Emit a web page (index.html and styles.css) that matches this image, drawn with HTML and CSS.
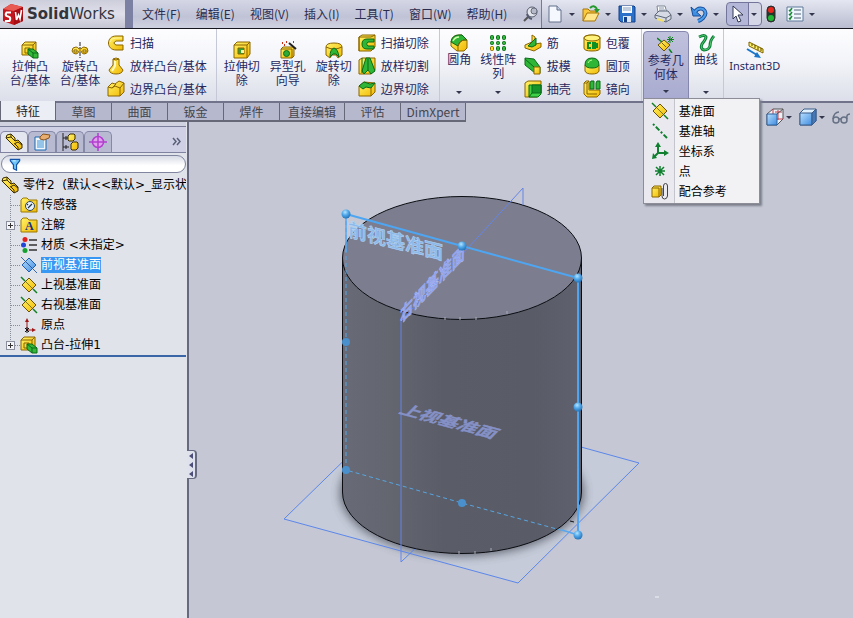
FILE: index.html
```
<!DOCTYPE html>
<html lang="zh-CN">
<head>
  <meta charset="UTF-8">
  <title>SolidWorks</title>
  <link rel="stylesheet" href="styles.css">
</head>
<body>
  <svg class="sprite" aria-hidden="true">
    <defs>
      <linearGradient id="gold" x1="0" y1="0" x2="1" y2="1"><stop offset="0" stop-color="#fff36a"/><stop offset="1" stop-color="#f2b800"/></linearGradient>
      <linearGradient id="blue" x1="0" y1="0" x2="1" y2="1"><stop offset="0" stop-color="#b8e0ff"/><stop offset="1" stop-color="#3f8be0"/></linearGradient>
    </defs>
    <symbol id="i-logo" viewBox="0 0 22 22">
      <path d="M1 6L9 1l12 3v14l-9 4L1 18z" fill="#c4161c"/><path d="M1 6L9 1l12 3-9 4z" fill="#e85a52"/><path d="M12 8l9-4v14l-9 4z" fill="#a80d14"/>
      <path d="M9 9.500H4.500q-1.500 2 0 3.500l3 1q1.500 1.500 0 4H3" fill="none" stroke="#fff" stroke-width="2"/><path d="M13.500 9l1 8 2-5 1.500 4 1.500-9" fill="none" stroke="#fff" stroke-width="1.600"/>
    </symbol>
    <symbol id="i-extrude" viewBox="0 0 18 18">
      <path d="M1 4l3-3h11v10l-3 3H1z" fill="url(#gold)" stroke="#8a6500"/><path d="M1 4h11v10M12 4l3-3M4 7h5v5H4z" fill="none" stroke="#8a6500"/>
      <path d="M7 8h5l5 4v5h-5l-5-4z" fill="#35b83a" stroke="#0a6b18"/><path d="M12 12h5M12 12v5M7 8l5 4" fill="none" stroke="#0a6b18"/>
    </symbol>
    <symbol id="i-revolve" viewBox="0 0 18 18">
      <path d="M9 1v16" stroke="#222" stroke-dasharray="4 1"/><path d="M1 10q0-4 4-4 2 0 3 2h2q1-2 3-2 4 0 4 4-1 3-4 3-2 0-3-3H8q-1 3-3 3-3 0-4-3z" fill="url(#gold)" stroke="#8a6500"/><path d="M3 9h3v2H3zM12 9h3v2h-3z" fill="#fff7a0" stroke="#8a6500"/>
    </symbol>
    <symbol id="i-sweep" viewBox="0 0 18 18"><path d="M16 2H9C-1 2-1 16 9 16h7v-5H9q-4-2 0-4h7z" fill="url(#gold)" stroke="#8a6500"/><path d="M15 4H9Q4 4 3 8" fill="none" stroke="#fff7a0"/></symbol>
    <symbol id="i-loft" viewBox="0 0 18 18"><path d="M6 2q3-2 6 0v6l4 5q-1 4-7 4t-7-4l4-5z" fill="url(#gold)" stroke="#8a6500"/><path d="M8 4v5l-3 5" fill="none" stroke="#fffbc0" stroke-width="2"/><path d="M6 2q3 2 6 0" fill="none" stroke="#8a6500"/></symbol>
    <symbol id="i-boundary" viewBox="0 0 18 18"><path d="M1 7l4-4 3 1 4-3 5 2v9l-4 4H1z" fill="url(#gold)" stroke="#8a6500"/><path d="M1 7l4 1 3-2 5 2 4-5M13 8v8M5 8l4-4" fill="none" stroke="#8a6500"/></symbol>
    <symbol id="i-cut" viewBox="0 0 18 18"><path d="M1 4l3-3h13v12l-3 4H1z" fill="url(#gold)" stroke="#8a6500"/><path d="M1 4h13v13M14 4l3-3" fill="none" stroke="#8a6500"/><path d="M5 7h6v6H5z" fill="#2fa236" stroke="#8a6500"/><path d="M8 9h3v3H8z" fill="#f8f7a8"/></symbol>
    <symbol id="i-hole" viewBox="0 0 18 18"><path d="M2 8l2-2h11v9l-2 2H2z" fill="url(#gold)" stroke="#8a6500"/><path d="M2 8h11v9" fill="none" stroke="#8a6500"/><circle cx="7.500" cy="12.500" r="3" fill="#2faa36" stroke="#0a6b18"/><path d="M10 2l7 6" stroke="#222" stroke-width="2"/><path d="M3 2h1M7 1h1M14 1h1M5 4h1" stroke="#d02a10" stroke-width="2"/></symbol>
    <symbol id="i-revcut" viewBox="0 0 18 18"><path d="M1 6q0-4 8-4t8 4v8l-4 3-2-3H7l-2 3-4-3z" fill="url(#gold)" stroke="#8a6500"/><path d="M1 6q8 4 16 0" fill="none" stroke="#8a6500"/><path d="M5 16q0-8 4-9 4 1 5 9l-3-3H8z" fill="#2fb636" stroke="#0a6b18"/></symbol>
    <symbol id="i-sweepcut" viewBox="0 0 18 18"><path d="M1 3l3-2h13v12l-4 4H1z" fill="url(#gold)" stroke="#8a6500"/><path d="M1 3h12l4-2M1 3v14" fill="none" stroke="#8a6500"/><path d="M16 5H9q-5 0-5 5t5 5h7v-3h-6q-3-2 0-4h6z" fill="#2fb636" stroke="#0a6b18"/></symbol>
    <symbol id="i-loftcut" viewBox="0 0 18 18"><path d="M1 3l3-2h13v12l-4 4H1z" fill="url(#gold)" stroke="#8a6500"/><path d="M8 1h4l5 13-4 3-3-4-4 4-2-3z" fill="#2fb636" stroke="#0a6b18"/><path d="M10 2v11M4 1v15" stroke="#0a6b18"/></symbol>
    <symbol id="i-boundcut" viewBox="0 0 18 18"><path d="M1 6l5-4 11 1v9l-4 4H1z" fill="url(#gold)" stroke="#8a6500"/><path d="M1 6l5-4 6 2 5-1-4 5-5-1-3 2z" fill="#2fb636" stroke="#0a6b18"/><path d="M13 8v8" stroke="#8a6500"/></symbol>
    <symbol id="i-fillet" viewBox="0 0 18 18"><path d="M1 8q1-7 8-7h3l5 5v8l-3 3H7l-6-5z" fill="url(#gold)" stroke="#8a6500"/><path d="M1 8q1-7 8-7h3l5 5q-7-1-9 6z" fill="#2fb636" stroke="#0a6b18"/><path d="M3 7q2-4 6-4" fill="none" stroke="#d8ffb0" stroke-width="1.500"/><path d="M8 12v5M8 12q2-7 9-6" fill="none" stroke="#8a6500"/></symbol>
    <symbol id="i-pattern" viewBox="0 0 18 18"><g fill="#2fb636" stroke="#0a6b18"><rect x="1.500" y="1.500" width="3" height="4" rx="1"/><rect x="7.500" y="1.500" width="3" height="4" rx="1"/><rect x="13.500" y="1.500" width="3" height="4" rx="1"/><rect x="7.500" y="7.500" width="3" height="3" rx="1"/><rect x="1.500" y="7.500" width="3" height="3" rx="1"/><rect x="13.500" y="7.500" width="3" height="3" rx="1"/><rect x="7.500" y="12.500" width="3" height="4" rx="1"/><rect x="13.500" y="12.500" width="3" height="4" rx="1"/></g><rect x="1.500" y="12.500" width="3" height="4" rx="1" fill="#ffd91a" stroke="#8a6500"/></symbol>
    <symbol id="i-rib" viewBox="0 0 18 18"><path d="M1 11l7-3V1l3 2v7l6-1v4l-7 4-9-3z" fill="url(#gold)" stroke="#8a6500"/><path d="M4 12l8-8v7l-4 2z" fill="#2fb636" stroke="#0a6b18"/></symbol>
    <symbol id="i-draft" viewBox="0 0 18 18"><path d="M1 1l9 1 6 8v6h-5L1 8z" fill="#2fb636" stroke="#0a6b18"/><path d="M1 2l9 8" stroke="#0a6b18"/><path d="M10 10h6v7h-6z" fill="url(#gold)" stroke="#8a6500"/></symbol>
    <symbol id="i-shell" viewBox="0 0 18 18"><path d="M1 3l3-2h13v12l-4 4H1z" fill="url(#gold)" stroke="#8a6500"/><path d="M5 5h12v9l-3 3H5z" fill="#3fd048" stroke="#0a6b18"/><path d="M8 5h9v8H8z" fill="#15942a" stroke="#0a6b18"/><path d="M5 17l3-4" stroke="#0a6b18"/></symbol>
    <symbol id="i-wrap" viewBox="0 0 18 18"><path d="M1 4q0-3 8-3t8 3v10q0 3-8 3t-8-3z" fill="url(#gold)" stroke="#8a6500"/><ellipse cx="9" cy="4" rx="8" ry="3" fill="#fff27a" stroke="#8a6500"/><path d="M8 9H5v5h3M10 9h2v5h-2zM14 9v5" fill="none" stroke="#0d8f22" stroke-width="2"/></symbol>
    <symbol id="i-dome" viewBox="0 0 18 18"><path d="M2 8h14v6q-1 3-7 3t-7-3z" fill="url(#gold)" stroke="#8a6500"/><path d="M2 8q0-7 7-7t7 7q-1 3-7 3T2 8z" fill="#2fb636" stroke="#0a6b18"/><path d="M5 6q1-3 4-3" fill="none" stroke="#b8ff90"/></symbol>
    <symbol id="i-mirror" viewBox="0 0 18 18"><path d="M1 3l2-2h3v9h11v4l-3 3H4l-3-3z" fill="url(#gold)" stroke="#8a6500"/><path d="M1 3h3v11h10M4 3l2-2" fill="none" stroke="#8a6500"/><path d="M7 3l1-2h3v8H7zM13 3l1-2h3v8h-4z" fill="#2fb636" stroke="#0a6b18"/></symbol>
    <symbol id="i-refgeo" viewBox="0 0 18 18"><path d="M0 3l5 4M12 14l3 4" stroke="#108020" stroke-width="1.500"/><path d="M7 5l6 5-6 6-6-6z" fill="url(#gold)" stroke="#6b5200"/><path d="M5 8l4 4" stroke="#7a6000"/><path d="M13 1v7M10 4.500h7M11 2l5 5M16 2l-5 5" stroke="#108020"/></symbol>
    <symbol id="i-curve" viewBox="0 0 18 18"><path d="M2 3q6-3 7 0 0 2-4 7-2 5 2 6 5 0 6-4 0-6 4-10" fill="none" stroke="#0b7f35" stroke-width="3"/><path d="M2 3q6-3 7 0 0 2-4 7-2 5 2 6 5 0 6-4 0-6 4-10" fill="none" stroke="#52c870"/></symbol>
    <symbol id="i-instant" viewBox="0 0 18 18"><path d="M3 1l14 7v4L3 5z" fill="#fff36a" stroke="#7a6000"/><path d="M6 3v2M9 4v3M12 6v3M15 7v3" stroke="#5a4000"/><path d="M1 8l10 6" stroke="#1976c8" stroke-width="2"/><path d="M15 17l-7-1 3-5z" fill="#1976c8"/></symbol>
    <symbol id="i-plane" viewBox="0 0 18 18"><path d="M1 1l4 4M13 13l4 4" stroke="#128022" stroke-width="1.500"/><path d="M9 2l7 7-7 7-7-7z" fill="url(#gold)" stroke="#6b5200"/><path d="M6 6l6 6" stroke="#7a7a18"/></symbol>
    <symbol id="i-planeblue" viewBox="0 0 18 18"><path d="M1 1l4 4M13 13l4 4" stroke="#3468b0"/><path d="M9 2l7 7-7 7-7-7z" fill="url(#blue)" stroke="#1f5eb0"/><path d="M6 6l6 6" stroke="#2b5a9a"/></symbol>
    <symbol id="i-axis" viewBox="0 0 18 18"><path d="M2 2l14 14" stroke="#108030" stroke-width="2" stroke-dasharray="2 2 5 2"/></symbol>
    <symbol id="i-coord" viewBox="0 0 18 18"><path d="M7 3v8h8M7 11l-4 4" fill="none" stroke="#108030" stroke-width="2"/><path d="M7 0l3 5H4zM18 11l-5-3v6zM1 17l1-6 4 5z" fill="#108030"/></symbol>
    <symbol id="i-point" viewBox="0 0 18 18"><path d="M9 4v10M4 9h10M5 5l8 8M13 5l-8 8" stroke="#108030" stroke-width="1.500"/></symbol>
    <symbol id="i-mate" viewBox="0 0 18 18"><path d="M1 6l2-2h7v9l-2 2H1z" fill="url(#gold)" stroke="#8a6500"/><path d="M1 6h7v9" fill="none" stroke="#8a6500"/><path d="M11 6v8q0 3 2.500 3t3-3V4q0-2.500-2-2.500t-2 2.500v10" fill="none" stroke="#444"/></symbol>
    <symbol id="i-pin" viewBox="0 0 18 18"><path d="M2 16l4-4" stroke="#555" stroke-width="2"/><circle cx="10" cy="7" r="5" fill="#e4e6ee" stroke="#555b6c"/><circle cx="12" cy="6" r="3" fill="#b7bbc9" stroke="#666c7c"/><path d="M5 9q1 4 5 5" stroke="#555b6c" stroke-width="2" fill="none"/></symbol>
    <symbol id="i-new" viewBox="0 0 18 18"><path d="M3 1h8l4 4v12H3z" fill="#f5f8ff" stroke="#62708c"/><path d="M11 1v4h4" fill="#c7d2e8" stroke="#62708c"/></symbol>
    <symbol id="i-open" viewBox="0 0 18 18"><path d="M1 16V4h5l2 2h6v3" fill="#f9c83c" stroke="#a87408"/><path d="M1 16l4-8h12l-4 8z" fill="#ffe68a" stroke="#a87408"/><path d="M8 3q4-4 7 1" fill="none" stroke="#239a2b" stroke-width="2"/><path d="M12 4h6l-3 4z" fill="#239a2b"/></symbol>
    <symbol id="i-save" viewBox="0 0 18 18"><path d="M1 1h15l1 1v15H3l-2-2z" fill="#2b70c9" stroke="#153f86"/><path d="M4 1h10v7H4z" fill="#f8fbff"/><path d="M5 3h8M5 5h8" stroke="#8aa0bf"/><path d="M5 11h8v6H5z" fill="#dce6f4"/><path d="M6 12h3v5H6z" fill="#153f86"/></symbol>
    <symbol id="i-print" viewBox="0 0 18 18"><path d="M4 8l-1-7h8l2 7" fill="#fff" stroke="#7d8594"/><path d="M5 3h5M5 5h6" stroke="#8796aa"/><path d="M1 10l4-4h9l3 4v4l-5 3-11-4z" fill="#d5dae4" stroke="#5f6878"/><path d="M1 10l11 3 5-3M12 13v4" fill="none" stroke="#5f6878"/><path d="M3 14l7 2" stroke="#f4e16a" stroke-width="2"/></symbol>
    <symbol id="i-undo" viewBox="0 0 18 18"><path d="M5 7q3-5 8-3 5 4 0 9-2 2-5 3" fill="none" stroke="#174f9e" stroke-width="4"/><path d="M1 2l2 9h8z" fill="#3f8fe0" stroke="#174f9e"/><path d="M5 7q3-5 8-3 5 4 0 9-2 2-5 3" fill="none" stroke="#4d9eea" stroke-width="2"/></symbol>
    <symbol id="i-arrow" viewBox="0 0 18 18"><path d="M5 1v13l3-3 2 6 3-1-3-6h5z" fill="#fff" stroke="#333a55"/></symbol>
    <symbol id="i-light" viewBox="0 0 18 18"><rect x="5" y="1" width="8" height="16" rx="4" fill="#24352b" stroke="#303030"/><circle cx="9" cy="5" r="3" fill="#e8281e"/><circle cx="9" cy="13" r="3" fill="#20b834"/></symbol>
    <symbol id="i-options" viewBox="0 0 18 18"><path d="M1 2h16v14H1z" fill="#eff6ff" stroke="#5e7898"/><path d="M8 5h7M8 9h7M8 13h7" stroke="#567"/><path d="M3 5l1 1 2-3M3 9l1 1 2-3M3 13l1 1 2-3" fill="none" stroke="#188a30" stroke-width="1.500"/></symbol>
    <symbol id="i-part" viewBox="0 0 18 18"><path d="M1 5l1-3 4-1 4 4v3l3-1 4 4v4l-4 2z" fill="url(#gold)" stroke="#3c2c00"/><path d="M1 5l12 12M6 1v3l4 4M1 5l5-1M9 11l4-2 4 3M13 17v-3l-3-3" fill="none" stroke="#3c2c00"/></symbol>
    <symbol id="i-prop" viewBox="0 0 18 18"><path d="M2 4h11v13H2z" fill="#eef6ff" stroke="#1769b0"/><path d="M4 8h7M4 10h7M4 12h7M4 14h7" stroke="#3a92d0"/><path d="M7 4l3-3 7 1-1 3-5 2-4-1z" fill="#e7ae70" stroke="#8a5520"/></symbol>
    <symbol id="i-config" viewBox="0 0 18 18"><path d="M2 0v18M2 5h6M2 14h6" stroke="#222" fill="none"/><path d="M7 3l2-2h4l1 1v4l-2 2H8L7 7zM10 11l2-2h4l1 1v5l-2 2h-4l-1-1z" fill="url(#gold)" stroke="#3c2c00"/><path d="M5 3v4M5 12v4" stroke="#222"/></symbol>
    <symbol id="i-target" viewBox="0 0 18 18"><circle cx="9" cy="9" r="5.500" fill="#e0a4ec" stroke="#b23fd0" stroke-width="1.500"/><path d="M9 0v18M0 9h18" stroke="#b23fd0" stroke-width="1.500"/></symbol>
    <symbol id="i-funnel" viewBox="0 0 18 18"><path d="M3 3h12v2l-4 5v7l-4-2v-5L3 5z" fill="#6fc4f4" stroke="#1252a8" stroke-width="1.500"/><path d="M6 5h4" stroke="#fff"/></symbol>
    <symbol id="i-sensor" viewBox="0 0 18 18"><path d="M1 4l2-2h4l2 2h8v12H1z" fill="url(#gold)" stroke="#9b7800"/><circle cx="10" cy="10" r="4.500" fill="#e8f2ff" stroke="#345"/><path d="M8 12l4-4M7 8l1 1" stroke="#234" stroke-width="1.300"/></symbol>
    <symbol id="i-material" viewBox="0 0 18 18"><circle cx="5" cy="3.500" r="2.500" fill="#e02020"/><circle cx="3.500" cy="9" r="2.500" fill="#2344d8"/><circle cx="5" cy="14.500" r="2.500" fill="#16a030"/><path d="M9 4h8M9 9h8M9 14h8" stroke="#333" stroke-width="1.500"/></symbol>
    <symbol id="i-origin" viewBox="0 0 18 18"><path d="M7 4v10h7" fill="none" stroke="#a01818"/><path d="M7 2l2 4H5zM16 14l-4-2v4z" fill="#a01818"/><path d="M5 12l4 4M9 12l-4 4M7 11v6" stroke="#111"/></symbol>
    <symbol id="i-view" viewBox="0 0 18 18"><path d="M1 6l6-5h10v10l-6 6H1z" fill="#edf0f6" stroke="#555"/><path d="M7 1v10h10M12 2v10M9 4h7" fill="none" stroke="#c24050"/><path d="M1 6h10v11H1z" fill="url(#blue)" stroke="#2c62a0"/><path d="M11 6l6-5" stroke="#555"/></symbol>
    <symbol id="i-shade" viewBox="0 0 18 18"><path d="M1 5l4-4h12v12l-4 4H1z" fill="#dff0ff" stroke="#3a5c88"/><path d="M1 5h12v12H1z" fill="url(#blue)" stroke="#3a5c88"/><path d="M13 5l4-4v12l-4 4z" fill="#4478b8" stroke="#3a5c88"/></symbol>
    <symbol id="i-glasses" viewBox="0 0 18 18"><circle cx="4" cy="12" r="3" fill="none" stroke="#667085" stroke-width="1.500"/><circle cx="12" cy="12" r="3" fill="none" stroke="#667085" stroke-width="1.500"/><path d="M1 11q1-7 6-7M7 11h2M15 11q-1-5 3-5" fill="none" stroke="#667085" stroke-width="1.500"/></symbol>
  </svg>

  <header class="topbar">
    <div class="brand"><svg class="logo"><use href="#i-logo"/></svg><span><b>Solid</b>Works</span></div>
    <nav class="menus">
      <button>文件(F)</button><button>编辑(E)</button><button>视图(V)</button><button>插入(I)</button><button>工具(T)</button><button>窗口(W)</button><button>帮助(H)</button>
      <button aria-label="固定"><svg class="icon"><use href="#i-pin"/></svg></button>
    </nav>
    <div class="quick">
      <button aria-label="新建"><svg class="icon"><use href="#i-new"/></svg><i class="caret"></i></button>
      <button aria-label="打开"><svg class="icon"><use href="#i-open"/></svg><i class="caret"></i></button>
      <button aria-label="保存"><svg class="icon"><use href="#i-save"/></svg><i class="caret"></i></button>
      <button aria-label="打印"><svg class="icon"><use href="#i-print"/></svg><i class="caret"></i></button>
      <button aria-label="撤销"><svg class="icon"><use href="#i-undo"/></svg><i class="caret"></i></button>
      <button class="split" aria-label="选择"><svg class="icon"><use href="#i-arrow"/></svg><i class="caret"></i></button>
      <button class="plain" aria-label="重建模型"><svg class="icon"><use href="#i-light"/></svg></button>
      <button aria-label="选项"><svg class="icon"><use href="#i-options"/></svg><i class="caret"></i></button>
    </div>
  </header>

  <section class="ribbon">
    <div class="group boss">
      <button class="cmd"><svg class="icon"><use href="#i-extrude"/></svg><span>拉伸凸<br>台/基体</span></button>
      <button class="cmd"><svg class="icon"><use href="#i-revolve"/></svg><span>旋转凸<br>台/基体</span></button>
      <div class="stack">
        <button><svg class="icon"><use href="#i-sweep"/></svg>扫描</button>
        <button><svg class="icon"><use href="#i-loft"/></svg>放样凸台/基体</button>
        <button><svg class="icon"><use href="#i-boundary"/></svg>边界凸台/基体</button>
      </div>
    </div>
    <div class="group cuts">
      <button class="cmd"><svg class="icon"><use href="#i-cut"/></svg><span>拉伸切<br>除</span></button>
      <button class="cmd"><svg class="icon"><use href="#i-hole"/></svg><span>异型孔<br>向导</span></button>
      <button class="cmd"><svg class="icon"><use href="#i-revcut"/></svg><span>旋转切<br>除</span></button>
      <div class="stack">
        <button><svg class="icon"><use href="#i-sweepcut"/></svg>扫描切除</button>
        <button><svg class="icon"><use href="#i-loftcut"/></svg>放样切割</button>
        <button><svg class="icon"><use href="#i-boundcut"/></svg>边界切除</button>
      </div>
    </div>
    <div class="group modify">
      <button class="cmd drop"><svg class="icon"><use href="#i-fillet"/></svg><span>圆角</span><i class="caret"></i></button>
      <button class="cmd drop"><svg class="icon"><use href="#i-pattern"/></svg><span>线性阵<br>列</span><i class="caret"></i></button>
      <div class="stack">
        <button><svg class="icon"><use href="#i-rib"/></svg>筋</button>
        <button><svg class="icon"><use href="#i-draft"/></svg>拔模</button>
        <button><svg class="icon"><use href="#i-shell"/></svg>抽壳</button>
      </div>
      <div class="stack">
        <button><svg class="icon"><use href="#i-wrap"/></svg>包覆</button>
        <button><svg class="icon"><use href="#i-dome"/></svg>圆顶</button>
        <button><svg class="icon"><use href="#i-mirror"/></svg>镜向</button>
      </div>
    </div>
    <div class="group ref">
      <div class="dropdown">
        <button class="cmd drop pressed"><svg class="icon"><use href="#i-refgeo"/></svg><span>参考几<br>何体</span><i class="caret"></i></button>
        <div class="popup">
          <button><svg class="icon"><use href="#i-plane"/></svg><span>基准面</span></button>
          <button><svg class="icon"><use href="#i-axis"/></svg><span>基准轴</span></button>
          <button><svg class="icon"><use href="#i-coord"/></svg><span>坐标系</span></button>
          <button><svg class="icon"><use href="#i-point"/></svg><span>点</span></button>
          <button><svg class="icon"><use href="#i-mate"/></svg><span>配合参考</span></button>
        </div>
      </div>
      <button class="cmd drop curve"><svg class="icon"><use href="#i-curve"/></svg><span>曲线</span><i class="caret"></i></button>
    </div>
    <div class="group">
      <button class="cmd instant"><svg class="icon"><use href="#i-instant"/></svg><span>Instant3D</span></button>
    </div>
  </section>

  <nav class="tabs">
    <button class="active">特征</button><button>草图</button><button>曲面</button><button>钣金</button><button>焊件</button><button class="wide">直接编辑</button><button>评估</button><button class="wide">DimXpert</button>
  </nav>

  <main class="work">
    <aside class="panel">
      <div class="panel-tabs">
        <button class="active" aria-label="设计树"><svg class="icon"><use href="#i-part"/></svg></button>
        <button aria-label="属性"><svg class="icon"><use href="#i-prop"/></svg></button>
        <button aria-label="配置"><svg class="icon"><use href="#i-config"/></svg></button>
        <button aria-label="尺寸专家"><svg class="icon"><use href="#i-target"/></svg></button>
        <button class="more" aria-label="更多"><svg width="10" height="9"><path d="M1 1l3 3.500L1 8M5 1l3 3.500L5 8" fill="none" stroke="#5a5f78" stroke-width="1.500"/></svg></button>
      </div>
      <label class="filter"><svg class="icon"><use href="#i-funnel"/></svg><input type="text" aria-label="过滤"></label>
      <div class="root"><svg class="icon"><use href="#i-part"/></svg><span>零件2&nbsp; (默认&lt;&lt;默认&gt;_显示状态</span></div>
      <ul class="tree">
        <li><svg class="icon"><use href="#i-sensor"/></svg><span>传感器</span></li>
        <li class="closed"><svg class="icon" viewBox="0 0 18 18"><path d="M1 4l2-2h4l2 2h8v12H1z" fill="url(#gold)" stroke="#9b7800"/><text x="5" y="14" class="note-a">A</text></svg><span>注解</span></li>
        <li><svg class="icon"><use href="#i-material"/></svg><span>材质 &lt;未指定&gt;</span></li>
        <li><svg class="icon"><use href="#i-planeblue"/></svg><span class="selected">前视基准面</span></li>
        <li><svg class="icon"><use href="#i-plane"/></svg><span>上视基准面</span></li>
        <li><svg class="icon"><use href="#i-plane"/></svg><span>右视基准面</span></li>
        <li><svg class="icon"><use href="#i-origin"/></svg><span>原点</span></li>
        <li class="closed"><svg class="icon"><use href="#i-extrude"/></svg><span>凸台-拉伸1</span></li>
      </ul>
      <button class="handle" aria-label="折叠面板"><svg width="8" height="26"><path d="M6 1v6L2 4zM6 10v6l-4-3zM6 19v6l-4-3z" fill="#4a4e78"/></svg></button>
    </aside>

    <section class="viewport">
      <svg class="scene" viewBox="189 122 664 496" preserveAspectRatio="xMinYMin meet">
        <defs>
          <linearGradient id="side" x1="0" x2="1" y1="0" y2="0"><stop offset="0" stop-color="#686b77"/><stop offset=".2" stop-color="#63656f"/><stop offset=".42" stop-color="#5a5c68"/><stop offset=".8" stop-color="#595c67"/><stop offset="1" stop-color="#5f626e"/></linearGradient>
          <radialGradient id="ball" cx=".4" cy=".3" r=".7"><stop offset="0" stop-color="#b4e4ff"/><stop offset=".5" stop-color="#4fa6e8"/><stop offset="1" stop-color="#2573b8"/></radialGradient>
          <filter id="soft" x="-20%" y="-20%" width="140%" height="140%"><feGaussianBlur stdDeviation="5"/></filter>
        </defs>
        <!-- ground plane and contact shadow -->
        <path d="M284 519l234 64 121-120-232-64z" fill="#c5cbd8"/>
        <ellipse cx="462" cy="493" rx="122" ry="63" fill="#4c4f5c" opacity=".8" filter="url(#soft)"/>
        <path d="M284 519l234 64 121-120-232-64z" fill="none" stroke="#5c86ea"/>
        <path d="M401 562l20-19" stroke="#5c86ea"/>
        <!-- body -->
        <path d="M342.500 258v234a119.500 61.500 0 0 0 239 0V258z" fill="url(#side)" stroke="#0c0d12"/>
        <ellipse cx="462" cy="258" rx="119.500" ry="61.500" fill="#7c7e8f" stroke="#0c0d12"/>
        <path d="M445 317v3M460 317v3M476 317v3M507 311v3M459 551v3M475 551v3M491 548v3" stroke="#a9acb9"/>
        <path d="M570 521l4 1" stroke="#101218"/>
        <!-- right plane -->
        <path d="M401 562V321L523 188v17" fill="none" stroke="#6585e6"/>
        <!-- front plane -->
        <path d="M346 214v256l116 33 102 28" fill="none" stroke="#57a6e2" stroke-dasharray="4 3"/>
        <path d="M346 214v38M562 530l16 5" stroke="#55a8f0" stroke-width="1.500"/>
        <path d="M346 214l232 64v257" fill="none" stroke="#4ea6f2" stroke-width="2"/>
        <g class="plane-name">
          <text transform="matrix(1 .25 0 1 348 236)" fill="#8db9ea" stroke="#b4d8f8">前视基准面</text>
          <text transform="matrix(.68 -.7 0 1 400 324)" fill="#8fa2ee" stroke="#b0befa">右视基准面</text>
          <text transform="matrix(1 .27 -.6 .6 398 413)" fill="#8591c6" stroke="#8591c6">上视基准面</text>
        </g>
        <g fill="url(#ball)"><circle cx="346" cy="214" r="4.500"/><circle cx="462" cy="246" r="4.500"/><circle cx="578" cy="278" r="4.500"/><circle cx="578" cy="407" r="4.500"/><circle cx="578" cy="535" r="4.500"/></g>
        <g fill="#4990cc"><circle cx="346" cy="342" r="4"/><circle cx="346" cy="470" r="4"/><circle cx="462" cy="503" r="4"/></g>
        <path d="M655 597h4" stroke="#f0f2f6"/>
      </svg>
      <div class="hud">
        <button aria-label="视图定向"><svg class="icon"><use href="#i-view"/></svg><i class="caret"></i></button>
        <button aria-label="显示样式"><svg class="icon"><use href="#i-shade"/></svg><i class="caret"></i></button>
        <button aria-label="隐藏/显示"><svg class="icon"><use href="#i-glasses"/></svg></button>
      </div>
    </section>
  </main>
</body>
</html>
```
FILE: styles.css
```
*, *::before {
  box-sizing: border-box;
}
body {
  margin: 0;
  height: 100vh;
  display: flex;
  flex-direction: column;
  overflow: hidden;
  background: #c5c8d4;
  color: #000;
  font: 12px/14px "Noto Sans CJK SC", sans-serif;
}
button, input {
  font: inherit;
  color: inherit;
  background: none;
  border: 0;
  padding: 0;
}
button {
  white-space: nowrap;
}
.sprite {
  position: absolute;
  width: 0;
  height: 0;
}
.icon {
  width: 18px;
  height: 18px;
  flex: none;
  display: block;
}
.caret {
  flex: none;
  border: 3px solid transparent;
  border-top-color: #33364c;
  border-bottom: 0;
}

/* title bar */
.topbar {
  display: flex;
  flex: none;
  height: 29px;
  border-bottom: 1px solid #16161e;
  background: linear-gradient(#e4e6f1, #b9bccf);
  color: #2b2d50;
}
.brand {
  display: flex;
  align-items: center;
  gap: 3px;
  width: 133px;
  padding-left: 2px;
  border-right: 8px solid #7c80a2;
  background: linear-gradient(#cdcedb, #dfe0ea 50%, #c4c5d2);
  color: #33343c;
  font: 15px/20px "DejaVu Sans", sans-serif;
}
.logo {
  width: 22px;
  height: 22px;
}
.menus {
  display: flex;
  align-items: center;
  gap: 15px;
  width: 409px;
  padding-left: 9px;
  border-right: 1px solid #777a90;
  background: linear-gradient(#d4d6e5, #c0c3d6 60%, #d0d2e0);
}
.quick {
  display: flex;
  align-items: center;
  padding-left: 4px;
}
.quick button {
  display: flex;
  align-items: center;
  gap: 5px;
  width: 36px;
  height: 24px;
}
.quick .split {
  padding-left: 1px;
  border: 1px solid #73769a;
  border-radius: 4px;
  background: linear-gradient(90deg, #b5b7d8 21px, #73769a 21px, #73769a 22px, #d5d7e6 22px);
}
.quick .plain {
  width: 24px;
}

/* command ribbon */
.ribbon {
  display: flex;
  flex: none;
  height: 74px;
  position: relative;
  z-index: 2;
  border-bottom: 2px solid #70738a;
  background: linear-gradient(#fdfdff, #f3f4f9 45%, #dcdfe9);
  color: #26285c;
}
.group {
  display: flex;
  border-right: 1px solid #c5c8d6;
}
.group:last-child {
  border: 0;
}
.boss {
  padding: 0 9px 0 5px;
}
.cuts {
  padding: 0 10px 0 2px;
}
.modify {
  padding-right: 5px;
}
.ref {
  padding-left: 1px;
}
.cmd {
  display: flex;
  flex-direction: column;
  align-items: center;
  width: 46px;
  height: 70px;
  padding-top: 12px;
  line-height: 14px;
}
.boss .cmd {
  width: 50px;
}
.drop {
  padding-top: 5px;
}
.drop .caret {
  margin: auto 0 5px;
}
.modify .cmd {
  width: 39px;
}
.ref .curve {
  width: 34px;
}
.instant {
  width: 62px;
  font-family: "Noto Sans", sans-serif;
  font-size: 11px;
}
.ref .pressed {
  margin-top: 2px;
  height: 68px;
  padding-top: 3px;
  border: 1px solid #8587ac;
  border-radius: 4px 4px 0 0;
  background: linear-gradient(#c0c1dc, #a9abd0);
}
.stack {
  display: flex;
  flex-direction: column;
  padding: 2px 0 0 2px;
}
.cuts .stack {
  padding-left: 1px;
}
.modify .stack {
  padding-left: 6px;
  width: 59px;
}
.stack button {
  display: flex;
  align-items: center;
  gap: 5px;
  height: 23px;
}
.dropdown {
  position: relative;
}
.popup {
  position: absolute;
  top: 69px;
  left: 0;
  width: 117px;
  padding: 2px 0;
  border: 1px solid #8d8d98;
  background: linear-gradient(90deg, #e9e9ef 30px, #c4c4cc 30px, #c4c4cc 31px, #f2f2f5 31px);
  box-shadow: 2px 2px 2px #7c7f8c;
  color: #000;
}
.popup button {
  display: flex;
  align-items: center;
  gap: 10px;
  width: 100%;
  height: 20px;
  padding-left: 7px;
}

/* feature tabs */
.tabs {
  display: flex;
  flex: none;
  height: 19px;
}
.tabs button {
  width: 56px;
  border: solid #666877;
  border-width: 0 1px 2px 0;
  background: #b6b8ce;
  color: #44464f;
}
.tabs .wide {
  width: 65px;
}
.tabs .active {
  margin-top: -2px;
  position: relative;
  z-index: 3;
  background: #eceef5;
  color: #222;
  border-left-width: 1px;
}

/* design tree */
.work {
  display: flex;
  flex: 1;
  min-height: 0;
}
.panel {
  position: relative;
  flex: none;
  width: 189px;
  padding-right: 1px;
  border-right: 2px solid #666a80;
  background: #e0e3ea;
}
.panel-tabs {
  display: flex;
  align-items: flex-end;
  height: 31px;
  border-top: 4px solid #d0d2e2;
  border-bottom: 1px solid #7f83a0;
  background: linear-gradient(#7a7e98 1px, #cfd0e6 1px);
}
.panel-tabs button {
  display: flex;
  justify-content: center;
  align-items: center;
  width: 28px;
  height: 21px;
  border: 1px solid #8589a6;
  border-bottom: 0;
  border-radius: 5px 5px 0 0;
  background: #b8bad2;
}
.panel-tabs .active {
  background: #e4e6ef;
}
.panel-tabs .more {
  margin-left: auto;
  width: 18px;
  border: 0;
  background: none;
}
.filter {
  display: flex;
  align-items: center;
  height: 18px;
  margin: 2px 0 2px 1px;
  padding-left: 4px;
  border: 1px solid #8086a0;
  border-radius: 9px;
  background: linear-gradient(#d8dbe6, #fff 60%);
}
.filter .icon {
  height: 14px;
}
.filter input {
  flex: 1;
  min-width: 0;
}
.root, .tree {
  font-family: "DejaVu Sans", "Noto Sans CJK SC", sans-serif;
}
.root {
  display: flex;
  align-items: center;
  gap: 4px;
  height: 20px;
  padding-left: 1px;
  overflow: hidden;
  white-space: nowrap;
}
.tree {
  margin: 0;
  padding: 0;
  list-style: none;
  border-bottom: 2px solid #3a66a8;
  background: repeating-linear-gradient(#888c98 0 1px, transparent 1px 2px) 10px 0 / 1px 150px no-repeat;
}
.tree li {
  display: flex;
  align-items: center;
  gap: 3px;
  height: 20px;
  padding-left: 20px;
  background: repeating-linear-gradient(90deg, #888c98 0 1px, transparent 1px 2px) 11px 10px / 10px 1px no-repeat;
}
.tree li::before {
  content: "";
  width: 9px;
  height: 9px;
  margin: 0 -3px 0 -14px;
}
.tree li .icon {
  margin-left: 5px;
}
.tree .closed::before {
  border: 1px solid #8c909c;
  background: linear-gradient(#333, #333) 1px 3px / 5px 1px no-repeat, linear-gradient(#333, #333) 3px 1px / 1px 5px no-repeat, #f4f5f8;
}
.selected {
  padding: 1px 0;
  background: #3797f2;
  color: #fff;
}
.note-a {
  font: bold 12px "Liberation Serif", serif;
  fill: #16308c;
}
.handle {
  position: absolute;
  top: 328px;
  right: -10px;
  z-index: 1;
  width: 10px;
  height: 29px;
  border: solid #666a80;
  border-width: 1px 2px 1px 0;
  border-radius: 0 4px 4px 0;
  background: #dfe2ec;
}
.handle svg {
  display: block;
}

/* graphics area */
.viewport {
  position: relative;
  flex: 1;
  min-width: 0;
}
.scene {
  display: block;
  width: 100%;
  height: 100%;
}
.plane-name {
  font: bold 19px "Noto Sans CJK SC", sans-serif;
  stroke-width: .5;
}
.hud {
  position: absolute;
  top: -14px;
  right: 3px;
  display: flex;
  gap: 7px;
}
.hud button {
  display: flex;
  align-items: center;
  gap: 2px;
}
```
